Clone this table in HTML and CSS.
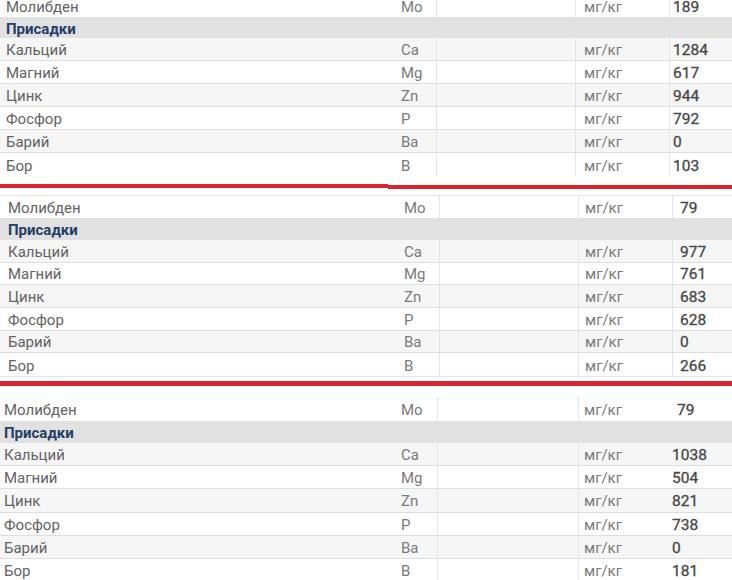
FILE: index.html
```html
<!DOCTYPE html>
<html lang="ru">
<head>
<meta charset="utf-8">
<title>Присадки</title>
<link rel="stylesheet" href="styles.css">
</head>
<body>
<div class="sheet">
  <section class="tbl t1">
    <div class="row first"><span class="c c-name">Молибден</span><span class="c c-sym">Mo</span><span class="c c-gap"></span><span class="c c-unit">мг/кг</span><span class="c c-val">189</span></div>
    <div class="row head"><span class="c c-title">Присадки</span></div>
    <div class="row alt"><span class="c c-name">Кальций</span><span class="c c-sym">Ca</span><span class="c c-gap"></span><span class="c c-unit">мг/кг</span><span class="c c-val">1284</span></div>
    <div class="row"><span class="c c-name">Магний</span><span class="c c-sym">Mg</span><span class="c c-gap"></span><span class="c c-unit">мг/кг</span><span class="c c-val">617</span></div>
    <div class="row alt"><span class="c c-name">Цинк</span><span class="c c-sym">Zn</span><span class="c c-gap"></span><span class="c c-unit">мг/кг</span><span class="c c-val">944</span></div>
    <div class="row"><span class="c c-name">Фосфор</span><span class="c c-sym">P</span><span class="c c-gap"></span><span class="c c-unit">мг/кг</span><span class="c c-val">792</span></div>
    <div class="row alt"><span class="c c-name">Барий</span><span class="c c-sym">Ba</span><span class="c c-gap"></span><span class="c c-unit">мг/кг</span><span class="c c-val">0</span></div>
    <div class="row last"><span class="c c-name">Бор</span><span class="c c-sym">B</span><span class="c c-gap"></span><span class="c c-unit">мг/кг</span><span class="c c-val">103</span></div>
  </section>

  <div class="redline r1"><span class="seg seg-a"></span><span class="seg seg-b"></span></div>

  <section class="tbl t2">
    <div class="row first"><span class="c c-name">Молибден</span><span class="c c-sym">Mo</span><span class="c c-gap"></span><span class="c c-unit">мг/кг</span><span class="c c-val">79</span></div>
    <div class="row head"><span class="c c-title">Присадки</span></div>
    <div class="row alt"><span class="c c-name">Кальций</span><span class="c c-sym">Ca</span><span class="c c-gap"></span><span class="c c-unit">мг/кг</span><span class="c c-val">977</span></div>
    <div class="row"><span class="c c-name">Магний</span><span class="c c-sym">Mg</span><span class="c c-gap"></span><span class="c c-unit">мг/кг</span><span class="c c-val">761</span></div>
    <div class="row alt"><span class="c c-name">Цинк</span><span class="c c-sym">Zn</span><span class="c c-gap"></span><span class="c c-unit">мг/кг</span><span class="c c-val">683</span></div>
    <div class="row"><span class="c c-name">Фосфор</span><span class="c c-sym">P</span><span class="c c-gap"></span><span class="c c-unit">мг/кг</span><span class="c c-val">628</span></div>
    <div class="row alt"><span class="c c-name">Барий</span><span class="c c-sym">Ba</span><span class="c c-gap"></span><span class="c c-unit">мг/кг</span><span class="c c-val">0</span></div>
    <div class="row last"><span class="c c-name">Бор</span><span class="c c-sym">B</span><span class="c c-gap"></span><span class="c c-unit">мг/кг</span><span class="c c-val">266</span></div>
  </section>

  <div class="redline r2"><span class="seg seg-full"></span></div>

  <section class="tbl t3">
    <div class="row first"><span class="c c-name">Молибден</span><span class="c c-sym">Mo</span><span class="c c-gap"></span><span class="c c-unit">мг/кг</span><span class="c c-val c-val-shift">79</span></div>
    <div class="row head"><span class="c c-title">Присадки</span></div>
    <div class="row alt"><span class="c c-name">Кальций</span><span class="c c-sym">Ca</span><span class="c c-gap"></span><span class="c c-unit">мг/кг</span><span class="c c-val">1038</span></div>
    <div class="row"><span class="c c-name">Магний</span><span class="c c-sym">Mg</span><span class="c c-gap"></span><span class="c c-unit">мг/кг</span><span class="c c-val">504</span></div>
    <div class="row alt"><span class="c c-name">Цинк</span><span class="c c-sym">Zn</span><span class="c c-gap"></span><span class="c c-unit">мг/кг</span><span class="c c-val">821</span></div>
    <div class="row"><span class="c c-name">Фосфор</span><span class="c c-sym">P</span><span class="c c-gap"></span><span class="c c-unit">мг/кг</span><span class="c c-val">738</span></div>
    <div class="row alt"><span class="c c-name">Барий</span><span class="c c-sym">Ba</span><span class="c c-gap"></span><span class="c c-unit">мг/кг</span><span class="c c-val">0</span></div>
    <div class="row last"><span class="c c-name">Бор</span><span class="c c-sym">B</span><span class="c c-gap"></span><span class="c c-unit">мг/кг</span><span class="c c-val">181</span></div>
  </section>
</div>
</body>
</html>
```

FILE: styles.css
```css
html, body {
  margin: 0;
  padding: 0;
  background: #ffffff;
}

body {
  width: 732px;
  height: 580px;
  overflow: hidden;
  font-family: Roboto, "Noto Sans", "Liberation Sans", sans-serif;
  font-size: 15px;
  color: #666666;
}

.sheet {
  display: flex;
  flex-direction: column;
}

.tbl {
  display: flex;
  flex-direction: column;
}

.row {
  display: grid;
  grid-template-columns: var(--cols);
  height: var(--rh);
  box-sizing: border-box;
  border-bottom: 1px solid #dedede;
  background: #ffffff;
}

.row.alt {
  background: #f6f6f6;
}

.row.last {
  border-bottom: none;
}

.row.first {
  border-bottom: none;
  height: var(--first-h);
}

.row.head {
  display: flex;
  height: var(--head-h);
  background: #e1e1e1;
  border-bottom: none;
}

.c {
  display: flex;
  align-items: center;
  padding-top: 2px;
  white-space: nowrap;
  overflow: hidden;
  box-sizing: border-box;
}

.c-name {
  padding-left: var(--pad-name);
  color: #636363;
}

.c-title {
  padding-left: var(--pad-name);
  font-weight: 700;
  color: #243e66;
}

.c-sym {
  padding-left: var(--pad-sym);
  color: #7a7a7a;
}

.c-gap {
  border-left: 1px solid #e4e4e4;
}

.c-unit {
  padding-left: var(--pad-unit);
  border-left: 1px solid #e4e4e4;
  color: #7a7a7a;
}

.c-val {
  padding-left: var(--pad-val);
  border-left: 1px solid var(--val-border);
  color: #474747;
  font-size: 15.5px;
  font-weight: 400;
  -webkit-text-stroke: 0.3px #474747;
}

/* section 1 */
.t1 {
  --cols: 395px 41px 139px 94px 63px;
  --rh: 23px;
  --first-h: 22px;
  --head-h: 21px;
  --pad-name: 6px;
  --pad-sym: 6px;
  --pad-unit: 8px;
  --pad-val: 3px;
  --val-border: #e4e4e4;
  margin-top: -5px;
}

/* section 2 */
.t2 {
  --cols: 398px 41px 139px 94px 60px;
  --rh: 22.67px;
  --first-h: 22px;
  --head-h: 22px;
  --pad-name: 8px;
  --pad-sym: 6px;
  --pad-unit: 6px;
  --pad-val: 7px;
  --val-border: #e4e4e4;
  margin-top: 6px;
  border-top: 1px solid #e6e6e6;
  border-bottom: 1px solid #dbe7dc;
}

/* section 3 */
.t3 {
  --cols: 395px 42px 141px 90px 64px;
  --rh: 23.2px;
  --first-h: 24px;
  --head-h: 22px;
  --pad-name: 4px;
  --pad-sym: 6px;
  --pad-unit: 5px;
  --pad-val: 3px;
  --val-border: transparent;
  margin-top: 11px;
}

.c-val-shift {
  padding-left: 8px;
}

/* red separators */
.redline {
  display: flex;
  align-items: flex-start;
}

.r1 {
  margin-top: 8px;
  height: 5px;
}

.r2 {
  margin-top: 4px;
  height: 5px;
}

.seg {
  display: block;
  height: 4px;
  background: #d9232e;
}

.seg-a {
  width: 388px;
}

.seg-b {
  flex: 1;
  margin-top: 1px;
}

.seg-full {
  flex: 1;
  height: 5px;
}
```
